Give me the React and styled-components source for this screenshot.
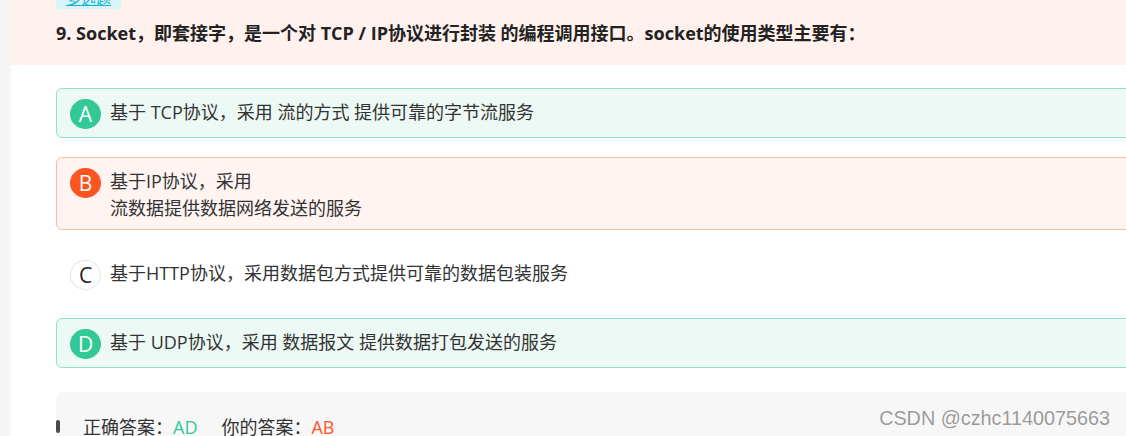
import React from "react";
import styled, { createGlobalStyle } from "styled-components";

const Global = createGlobalStyle`
  html, body { margin: 0; padding: 0; background: #fff; overflow: hidden; }
  body { font-family: "Open Sans", "Noto Sans CJK SC", sans-serif; color: #333; }
`;

const Page = styled.div`
  display: flex;
  align-items: flex-start;
  width: 1126px;
  height: 436px;
  overflow: hidden;
  position: relative;
`;

const SideStrip = styled.div`
  flex: 0 0 11px;
  align-self: stretch;
  background: #f5f5f5;
`;

const Main = styled.div`
  flex: 0 0 1200px;
  display: block;
`;

const Header = styled.div`
  background: #fff1ed;
  height: 65px;
  box-sizing: border-box;
  padding-left: 45px;
  display: flex;
  flex-direction: column;
  align-items: flex-start;
`;

const Tag = styled.span`
  margin-top: -13px;
  height: 22px;
  line-height: 22px;
  padding: 0 10px;
  font-size: 15px;
  background: #d7f6fb;
  color: #19b2d1;
  border-radius: 4px;
  text-decoration: underline;
`;

const Title = styled.h2`
  margin: 11px 0 0;
  font-size: 18px;
  line-height: 27px;
  font-weight: 700;
  color: #222;
`;

const OptionList = styled.div`
  display: flex;
  flex-direction: column;
  gap: 19px;
  padding-left: 45px;
  margin-top: 23px;
`;

const variants = {
  right: { border: "#8fe3c6", bg: "#edf9f5", circle: "#33c997", circleBorder: "#33c997", letter: "#fff" },
  wrong: { border: "#ffbca4", bg: "#fff4f1", circle: "#fc5522", circleBorder: "#fc5522", letter: "#fff" },
  none: { border: "transparent", bg: "transparent", circle: "#fff", circleBorder: "#e2e2e2", letter: "#222" },
};

const Option = styled.div`
  display: flex;
  align-items: flex-start;
  gap: 9px;
  padding: 8px 13px;
  border: 1px solid ${(p) => variants[p.$state].border};
  background: ${(p) => variants[p.$state].bg};
  border-radius: 6px;
`;

const Circle = styled.span`
  flex: 0 0 auto;
  box-sizing: border-box;
  width: 31px;
  height: 30px;
  margin-top: 2px;
  border-radius: 50%;
  display: flex;
  align-items: center;
  justify-content: center;
  font-size: 21px;
  background: ${(p) => variants[p.$state].circle};
  border: 1px solid ${(p) => variants[p.$state].circleBorder};
  color: ${(p) => variants[p.$state].letter};
`;

const OptionText = styled.div`
  font-size: 18px;
  line-height: 26.5px;
  padding-top: 2px;
  color: #333;
`;

const AnswerBox = styled.div`
  margin: 24px 0 0 45px;
  background: #f7f7f7;
  border-radius: 8px 0 0 0;
  height: 80px;
  padding-top: 22px;
  box-sizing: border-box;
  display: flex;
  align-items: flex-start;
`;

const Marker = styled.span`
  width: 4px;
  height: 13px;
  margin-top: 6px;
  background: #4a4a4a;
  border-radius: 2px;
`;

const AnswerLine = styled.div`
  margin-left: 23px;
  font-size: 18px;
  line-height: 27px;
  color: #333;
  display: flex;
`;

const Letters = styled.span`
  color: ${(p) => (p.$ok ? "#33c997" : "#fc5531")};
  margin-right: ${(p) => (p.$ok ? "24px" : "0")};
`;

const Watermark = styled.div`
  position: absolute;
  right: 16px;
  top: 404px;
  font-family: "Liberation Sans", Arial, sans-serif;
  font-size: 19.8px;
  line-height: 28px;
  color: #9a9a9a;
  text-shadow: 0 0 1px #fff, 0 0 1px #fff;
`;

const options = [
  { key: "A", state: "right", lines: ["基于 TCP协议，采用 流的方式 提供可靠的字节流服务"] },
  { key: "B", state: "wrong", lines: ["基于IP协议，采用", "流数据提供数据网络发送的服务"] },
  { key: "C", state: "none", lines: ["基于HTTP协议，采用数据包方式提供可靠的数据包装服务"] },
  { key: "D", state: "right", lines: ["基于 UDP协议，采用 数据报文 提供数据打包发送的服务"] },
];

export default function App() {
  return (
    <>
      <Global />
      <Page>
        <SideStrip />
        <Main>
          <Header>
            <Tag>多选题</Tag>
            <Title>9. Socket，即套接字，是一个对 TCP / IP协议进行封装 的编程调用接口。socket的使用类型主要有：</Title>
          </Header>
          <OptionList>
            {options.map((o) => (
              <Option key={o.key} $state={o.state}>
                <Circle $state={o.state}>{o.key}</Circle>
                <OptionText>
                  {o.lines.map((l, i) => (
                    <div key={i}>{l}</div>
                  ))}
                </OptionText>
              </Option>
            ))}
          </OptionList>
          <AnswerBox>
            <Marker />
            <AnswerLine>
              正确答案：<Letters $ok>AD</Letters>你的答案：<Letters>AB</Letters>
            </AnswerLine>
          </AnswerBox>
        </Main>
        <Watermark>CSDN @czhc1140075663</Watermark>
      </Page>
    </>
  );
}
